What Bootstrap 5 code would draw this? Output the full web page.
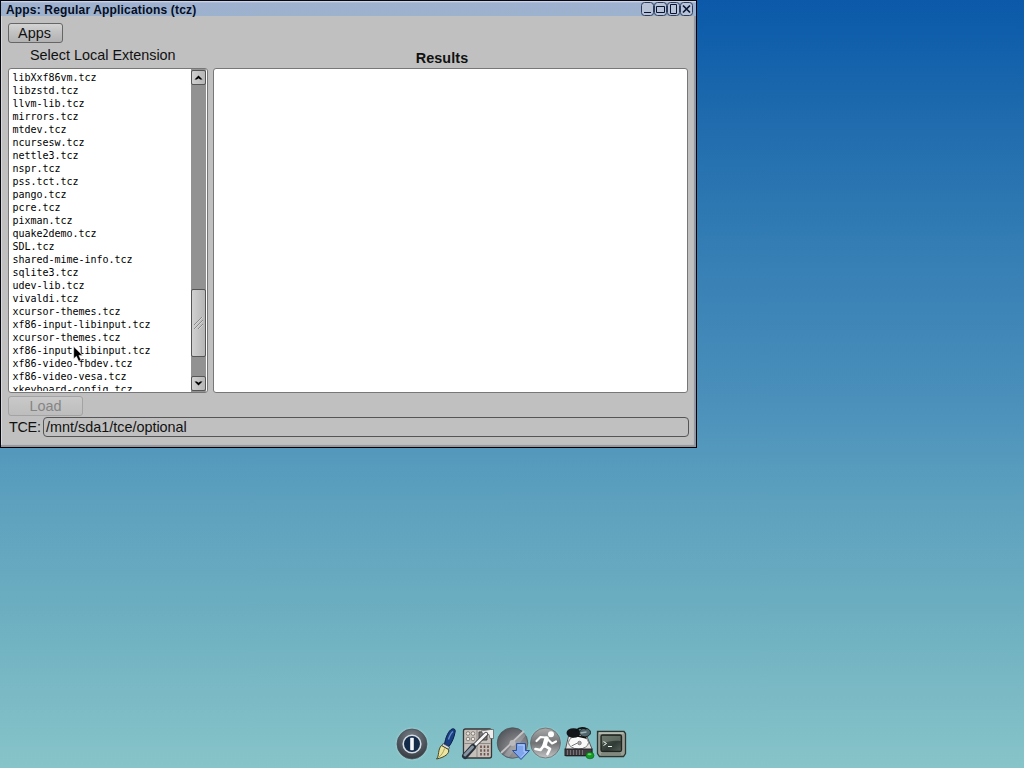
<!DOCTYPE html>
<html lang="en">
<head>
  <meta charset="UTF-8">
  <meta name="viewport" content="width=device-width, initial-scale=1">
  <title>Apps: Regular Applications (tcz)</title>
  <!-- Bootstrap CSS -->
  <link href="https://cdn.jsdelivr.net/npm/bootstrap@5.3.0/dist/css/bootstrap.min.css" rel="stylesheet">
  <style>
    body {
      height: 768px;
      font-family: "Liberation Sans", Arial, sans-serif;
      font-size: 14.4px;
      line-height: 20px;
      color: #111;
      background: linear-gradient(#0b59a8 0, #0e5dab 25px, #1f6bad 120px, #367fb5 260px, #4b90bb 400px, #5b9fbe 490px, #6badc0 600px, #87c4c9 768px);
    }

    /* Window frame */
    .app-window {
      position: absolute;
      left: 0;
      top: 0;
      width: 697px;
      height: 448px;
      background: #c0c0c0;
      border: 1px solid #080812;
      border-right-color: #000;
      border-bottom-color: #000;
      box-shadow: inset -2px -2px 1px #92949f, inset 1px 0 #d8d8dc;
    }
    .titlebar {
      height: 15px;
      padding: 0 3px 0 5px;
      background: linear-gradient(#d9e0ec 0, #9fb1cf 2px, #9cb2cd 100%);
      font-size: 12px;
      font-weight: bold;
      letter-spacing: 0.17px;
      line-height: 18px;
      color: #050d22;
    }
    .titlebar svg { display: block; margin-top: 1px; }
    .window-body { padding: 7px 7px 0; }

    /* Buttons */
    .btn-fl {
      height: 20px;
      padding: 0;
      border: 1px solid #666;
      border-radius: 3px;
      background: linear-gradient(#d4d4d4, #c2c2c2 45%, #b2b2b2);
      line-height: 18px;
      color: #111;
    }
    .btn-apps { width: 55px; padding-right: 2px; }
    .btn-load { width: 75px; margin: 3px 0 1px; }
    .btn-fl:disabled {
      color: #858585;
      border-color: #a3a3a3;
      background: linear-gradient(#c9c9c9, #bdbdbd);
    }

    /* File list and results */
    .panes { gap: 5px; }
    .left-pane { width: 200px; }
    .right-pane { width: 475px; }
    .pane-label { height: 25px; padding: 2px 0 0 22px; }
    .results-label { height: 25px; padding: 5px 0 0; margin-left: -17px; font-weight: bold; letter-spacing: 0.1px; }
    .box {
      height: 325px;
      background: #fff;
      border: 1px solid #777;
      border-radius: 3px;
      overflow: hidden;
    }
    .file-list {
      padding: 2px 0 0 3.5px;
      height: 322px;
      font-family: "DejaVu Sans Mono", monospace;
      font-size: 10px;
      letter-spacing: -0.02px;
      line-height: 13px;
      color: #000;
    }
    .scroll-track { width: 15px; margin-right: 1px; padding: 1px 0; background: #929292; }
    .scroll-part {
      border: 1px solid #555;
      border-radius: 2px;
      background: linear-gradient(90deg, #d0d0d0, #b6b6b6);
    }
    .scroll-part svg { display: block; }
    .scroll-arrow { height: 15px; }
    .scroll-thumb { height: 68px; margin-bottom: 19px; }

    .path-field {
      height: 20px;
      padding-left: 2px;
      border: 1px solid #555;
      border-radius: 4px;
      line-height: 18px;
    }
    .tce-label { width: 35px; padding-left: 1px; letter-spacing: -0.3px; }

    .pointer { position: absolute; left: 73px; top: 346px; }
    .dock { position: absolute; left: 395px; top: 726px; }
  </style>
</head>
<body class="overflow-hidden position-relative">
  <div class="app-window">
    <div class="titlebar d-flex justify-content-between">
      <span class="text-nowrap">Apps: Regular Applications (tcz)</span>
      <svg width="52" height="14" viewBox="0 0 52 14" fill="#b9c3d8" stroke="#2d3c5c">
        <rect x=".5" y=".5" width="12" height="13" rx="3"/>
        <rect x="13.5" y=".5" width="12" height="13" rx="3"/>
        <rect x="26.5" y=".5" width="12" height="13" rx="3"/>
        <rect x="39.5" y=".5" width="12" height="13" rx="3"/>
        <path d="M3 10.500h7M15.500 4.500h8v6h-8zM29.500 2.500h6v9h-6z" stroke="#081532"/>
        <path d="M42 3.500l7 7M49 3.500l-7 7" stroke="#081532" stroke-width="1.700"/>
      </svg>
    </div>

    <div class="window-body d-flex flex-column">
      <div class="d-flex">
        <button type="button" class="btn-fl btn-apps">Apps</button>
      </div>

      <div class="panes d-flex">
        <div class="left-pane">
          <div class="pane-label text-nowrap">Select Local Extension</div>
          <div class="box d-flex">
            <pre class="file-list flex-grow-1 mb-0 overflow-hidden">libXxf86vm.tcz
libzstd.tcz
llvm-lib.tcz
mirrors.tcz
mtdev.tcz
ncursesw.tcz
nettle3.tcz
nspr.tcz
pss.tct.tcz
pango.tcz
pcre.tcz
pixman.tcz
quake2demo.tcz
SDL.tcz
shared-mime-info.tcz
sqlite3.tcz
udev-lib.tcz
vivaldi.tcz
xcursor-themes.tcz
xf86-input-libinput.tcz
xcursor-themes.tcz
xf86-input-libinput.tcz
xf86-video-fbdev.tcz
xf86-video-vesa.tcz
xkeyboard-config.tcz</pre>
            <div class="scroll-track d-flex flex-column">
              <div class="scroll-part scroll-arrow">
                <svg width="13" height="13"><path d="M2.500 8.500l4-4 4 4H8.200l-1.700-1.300-1.700 1.300z"/></svg>
              </div>
              <div class="scroll-part scroll-thumb mt-auto">
                <svg width="13" height="66" fill="none">
                  <path d="M2 35l8-8M2 39l9-9M6 39l5-5" stroke="#8a8a8a"/>
                  <path d="M3 35l8-8M3 39l8-8M7 39l4-4" stroke="#dedede" stroke-width=".7"/>
                </svg>
              </div>
              <div class="scroll-part scroll-arrow">
                <svg width="13" height="13"><path d="M2.500 4.500l4 4 4-4H8.200L6.500 5.800 4.800 4.500z"/></svg>
              </div>
            </div>
          </div>
        </div>
        <div class="right-pane">
          <div class="results-label text-center">Results</div>
          <div class="box"></div>
        </div>
      </div>

      <div class="d-flex">
        <button type="button" class="btn-fl btn-load" disabled>Load</button>
      </div>
      <div class="d-flex">
        <div class="tce-label">TCE:</div>
        <div class="path-field flex-grow-1">/mnt/sda1/tce/optional</div>
      </div>
    </div>
  </div>

  <!-- Mouse pointer -->
  <svg class="pointer" width="12" height="18" viewBox="0 0 12 18">
    <path d="M.7 .5v12.300l2.700-2.500 2.300 5 2.400-1-2.200-4.900h3.700z" fill="#000" stroke="#fff" stroke-width=".5"/>
  </svg>

  <!-- Dock -->
  <svg class="dock" width="236" height="38" viewBox="0 0 236 38">
    <defs>
      <radialGradient id="darkBall" cx=".5" cy=".3" r=".7">
        <stop offset="0" stop-color="#7c838b"/>
        <stop offset="1" stop-color="#363b42"/>
      </radialGradient>
      <linearGradient id="greyBall" x1="0" y1="0" x2="0" y2="1">
        <stop offset="0" stop-color="#aaa"/>
        <stop offset=".5" stop-color="#707274"/>
        <stop offset="1" stop-color="#c2c4c4"/>
      </linearGradient>
      <radialGradient id="discBall" cx=".7" cy=".75" r=".8">
        <stop offset="0" stop-color="#a5a5a8"/>
        <stop offset="1" stop-color="#55585d"/>
      </radialGradient>
      <linearGradient id="screen" x1="0" y1="0" x2="1" y2="1">
        <stop offset="0" stop-color="#586359"/>
        <stop offset=".6" stop-color="#303a36"/>
        <stop offset="1" stop-color="#55615a"/>
      </linearGradient>
      <radialGradient id="glow">
        <stop offset=".75" stop-color="#d6e6df" stop-opacity=".45"/>
        <stop offset="1" stop-color="#d6e6df" stop-opacity="0"/>
      </radialGradient>
    </defs>

    <!-- exit -->
    <circle cx="17" cy="18" r="17.500" fill="url(#glow)"/>
    <circle cx="17" cy="18" r="15" fill="url(#darkBall)" stroke="#444c54" stroke-width=".7"/>
    <circle cx="17" cy="18" r="8.800" fill="#142a49" stroke="#d5dde4" stroke-width="1.600"/>
    <rect x="15.200" y="11.800" width="3.600" height="12.400" rx=".7" fill="#f3f6f8"/>

    <!-- editor brush -->
    <g transform="translate(-2.500 -.5)">
      <path d="M52 19C53 12 56 5 59.500 3.500c2.600-.8 3.800.8 3 3.500C61.500 12 60 16 56.500 21z" fill="#193f82" stroke="#0c1f48"/>
      <path d="M56 14c1-3.500 2.500-6.500 4.500-8" stroke="#6790c8" stroke-width="1.300" fill="none"/>
      <path d="M50.500 18l6.500 3.500-1 2.500-7-3.200z" fill="#d8dde0" stroke="#3b4450" stroke-width=".8"/>
      <path d="M49 20l7 4c1.500 4-4 8-12 9.500 3-3 1-9.500 5-13.500z" fill="#ece5a0" stroke="#46431f"/>
      <path d="M52 23c-1 4-3.500 7-6 9" stroke="#aaa05b" fill="none"/>
    </g>

    <!-- control panel -->
    <rect x="68.500" y="3" width="28" height="29" rx="2" fill="#c6c0ba" stroke="#363636" stroke-width="1.300"/>
    <path d="M69.500 17.500h26M82 4v27" stroke="#8d8985"/>
    <g fill="#eee9e3" stroke="#736e69" stroke-width=".8">
      <circle cx="73" cy="7.500" r="1.800"/><circle cx="78" cy="7.500" r="1.800"/>
      <circle cx="73" cy="13" r="1.800"/><circle cx="78" cy="13" r="1.800"/>
    </g>
    <path d="M86 19.500v10M89.500 19.500v10M93 19.500v10" stroke="#6c4d49" stroke-width="1.600" stroke-dasharray="2.500 1.300"/>
    <path d="M84 6h8v8h-8z" fill="#777" stroke="#444"/>
    <path d="M86 5l9.500-1.500h3v9h-3.500l-1-4-5 .5z" fill="#eee" stroke="#555" stroke-width=".7"/>
    <path d="M91 8L76 23" stroke="#333" stroke-width="4.300" stroke-linecap="round"/>
    <path d="M91 8L76 23" stroke="#f4f4f4" stroke-width="2.700" stroke-linecap="round"/>
    <path d="M78 21L70 30" stroke="#29323b" stroke-width="6" stroke-linecap="round"/>
    <path d="M77.500 21L70 29" stroke="#8796a2" stroke-width="3" stroke-linecap="round"/>

    <!-- apps -->
    <circle cx="117.500" cy="17" r="15.300" fill="url(#discBall)" stroke="#484d53" stroke-width=".7"/>
    <path d="M109 29l19-24 3 4-17 22z" fill="#b8b8bb" opacity=".4"/>
    <path d="M106 27L129 5" stroke="#c4c4c6" stroke-width="1.800"/>
    <circle cx="117.500" cy="17" r="3" fill="#bababc"/>
    <path d="M121.500 17.500h9v7h4L126 33.500l-8.500-9h4z" fill="#7fa6ed" stroke="#2d5197"/>
    <path d="M123 19h6v7h2.500L126 31.500" fill="none" stroke="#b6cdfb"/>

    <!-- run -->
    <circle cx="150.500" cy="17" r="17" fill="url(#glow)"/>
    <circle cx="150.500" cy="17" r="15" fill="url(#greyBall)" stroke="#65696b" stroke-width=".8"/>
    <circle cx="156" cy="8.300" r="3" fill="#fff"/>
    <g fill="none" stroke="#fff" stroke-linecap="round" stroke-linejoin="round">
      <path d="M151.500 12.500l-2 7" stroke-width="4.500"/>
      <path d="M150.500 11.500l-5-.5-4 4M153 13.500l4 4 4-2" stroke-width="2.200"/>
      <path d="M148.500 20l-3 4-5-1M151 20.500l4 2.500-2.500 5" stroke-width="2.700"/>
    </g>

    <!-- mount tool -->
    <g transform="translate(-2.500 -1)">
      <path d="M173 24l3.500-15h17l6 15v7h-26.500z" fill="#e5e5e5" stroke="#555"/>
      <ellipse cx="186" cy="17.500" rx="10" ry="6.500" fill="#f9f9f9" stroke="#777"/>
      <circle cx="187" cy="18" r="1.800" fill="#aaa" stroke="#555" stroke-width=".6"/>
      <path d="M179 21l6-3" stroke="#777"/>
      <rect x="172.500" y="24" width="27" height="6.500" fill="#403c40" stroke="#222"/>
      <path d="M175 25v5M178 25v5M181 25v5M184 25v5M187 25v5M190 25v5" stroke="#777078"/>
      <ellipse cx="181" cy="8" rx="7" ry="4.800" fill="#131719"/>
      <ellipse cx="192.500" cy="7.500" rx="5.500" ry="4.300" fill="#51666c" stroke="#17201f"/>
      <path d="M183 6c3-3 7-4 11-2M185 11l9 2" stroke="#111" stroke-width="1.500" fill="none"/>
      <path d="M188 8l6-1" stroke="#9eb2b4" stroke-width="1.500"/>
      <ellipse cx="197.500" cy="30.500" rx="4" ry="3.300" fill="#159a27" stroke="#0a6818" stroke-width=".7"/>
      <ellipse cx="197" cy="29.300" rx="2" ry="1" fill="#6bd36c"/>
    </g>

    <!-- terminal -->
    <path d="M202.500 5.500h26.500l1.500 2v20l-2 3h-24l-2-3z" fill="#989e94" stroke="#30342e" stroke-width="1.300"/>
    <path d="M204 7h24.500" stroke="#d0d5cc"/>
    <rect x="206" y="9" width="20.500" height="16.500" rx="1.500" fill="url(#screen)" stroke="#20251f" stroke-width="1.300"/>
    <path d="M207 10h18.500v5c-6-1-13 0-18.500 3z" fill="#7b877c" opacity=".6"/>
    <path d="M208.500 15.500l3 2-3 2M213 20.500h4" stroke="#eef4ec" fill="none"/>
    <path d="M206 28h20" stroke="#6d7468"/>
  </svg>

  <!-- Bootstrap JS Bundle -->
  <script src="https://cdn.jsdelivr.net/npm/bootstrap@5.3.0/dist/js/bootstrap.bundle.min.js"></script>
</body>
</html>
